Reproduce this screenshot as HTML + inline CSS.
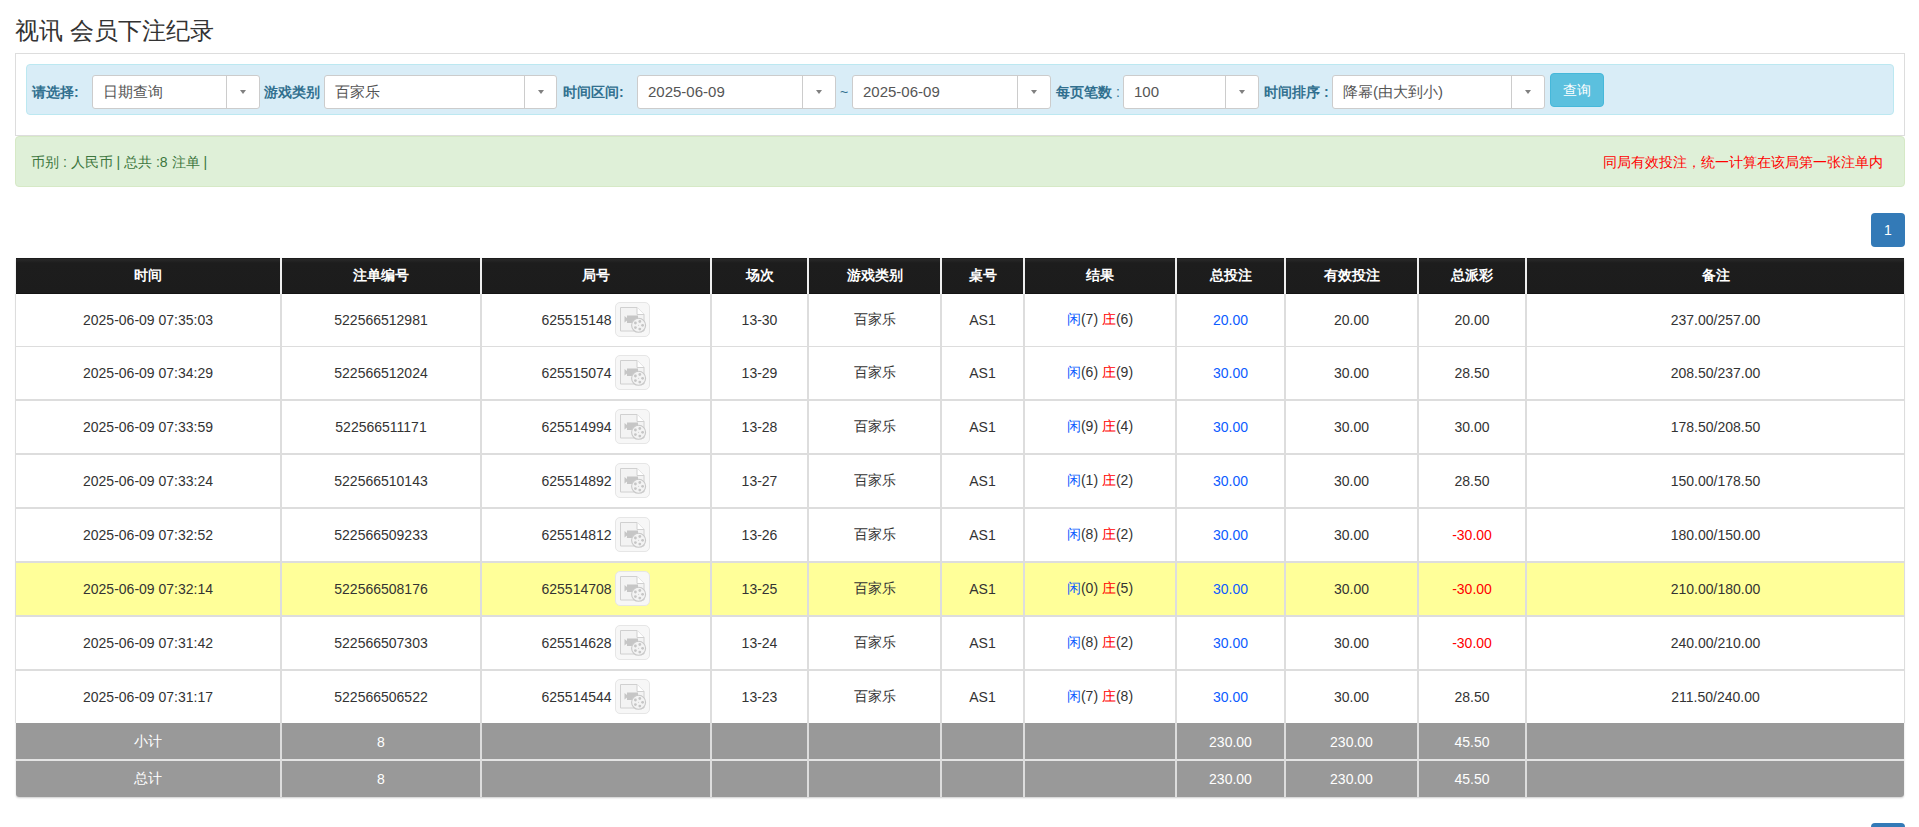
<!DOCTYPE html>
<html><head><meta charset="utf-8">
<style>
*{box-sizing:border-box;margin:0;padding:0}
html,body{width:1919px;height:827px;overflow:hidden;background:#fff}
body{font-family:"Liberation Sans",sans-serif;color:#333;font-size:14px;position:relative}
.a{position:absolute}
.title{left:15px;top:16px;font-size:24px;line-height:30px;color:#333;white-space:nowrap}
.panel{left:15px;top:53px;width:1890px;height:83px;border:1px solid #ddd;background:#fff}
.well{left:26px;top:64px;width:1868px;height:51px;background:#d9edf7;border:1px solid #bce8f1;border-radius:4px}
.lbl{font-weight:bold;color:#31708f;font-size:14px;line-height:20px;top:82px;white-space:nowrap}
.sel{top:75px;height:34px;background:#fff;border:1px solid #ccc;border-radius:3px}
.sel .t{position:absolute;left:10px;top:0;line-height:32px;font-size:15px;color:#555;white-space:nowrap}
.sel .d{position:absolute;top:0;bottom:0;width:1px;background:#ccc}
.sel .ar{position:absolute;top:14px;width:0;height:0;border-left:3.5px solid transparent;border-right:3.5px solid transparent;border-top:4px solid #808080}
.btn{left:1550px;top:73px;width:54px;height:34px;background:#5bc0de;border:1px solid #46b8da;border-radius:4px;color:#fff;font-size:14px;line-height:32px;text-align:center}
.alert{left:15px;top:136px;width:1890px;height:51px;background:#dff0d8;border:1px solid #d6e9c6;border-radius:4px}
.alt{left:31px;top:152px;color:#3c763d;font-size:14px;line-height:20px;white-space:nowrap}
.alr{right:36px;top:152px;color:#f00;font-size:14px;line-height:20px;white-space:nowrap}
.pg{left:1871px;width:34px;height:34px;background:#337ab7;border-radius:4px;color:#fff;font-size:14px;line-height:34px;text-align:center}
.thd{background:linear-gradient(#1c1c1c 0,#1c1c1c 1px,#292929 1px,#1d1d1d 5px,#1c1c1c 35px,#131313 35px)}
.c{display:flex;align-items:center;justify-content:center;white-space:nowrap;font-size:14px;color:#333}
.th{color:#fff;font-weight:bold}
.ft{color:#fff}
.bl{color:#0d5cff}
.rd{color:#f00}
.ic{display:inline-block;vertical-align:middle;width:35px;height:35px;margin-left:0;border:1px solid #e6e6e6;border-radius:5px;background:#f7f7f7;position:relative}
.ic{top:-1px}
.ic svg{position:absolute;left:-1px;top:-1px}
</style></head><body>
<div class="a title">视讯 会员下注纪录</div>
<div class="a panel"></div>
<div class="a well"></div>

<div class="a lbl" style="left:32px">请选择:</div>
<div class="a sel" style="left:92px;width:168px"><div class="t">日期查询</div><div class="d" style="left:133px"></div><div class="ar" style="left:147px"></div></div>

<div class="a lbl" style="left:264px">游戏类别</div>
<div class="a sel" style="left:324px;width:233px"><div class="t">百家乐</div><div class="d" style="left:199px"></div><div class="ar" style="left:213px"></div></div>

<div class="a lbl" style="left:563px">时间区间:</div>
<div class="a sel" style="left:637px;width:199px"><div class="t">2025-06-09</div><div class="d" style="left:164px"></div><div class="ar" style="left:178px"></div></div>
<div class="a" style="left:840px;top:82px;line-height:20px;color:#31708f">~</div>
<div class="a sel" style="left:852px;width:199px"><div class="t">2025-06-09</div><div class="d" style="left:164px"></div><div class="ar" style="left:178px"></div></div>

<div class="a lbl" style="left:1056px">每页笔数 <span style="font-weight:normal">:</span></div>
<div class="a sel" style="left:1123px;width:136px"><div class="t">100</div><div class="d" style="left:101px"></div><div class="ar" style="left:115px"></div></div>

<div class="a lbl" style="left:1264px">时间排序 :</div>
<div class="a sel" style="left:1332px;width:213px"><div class="t">降幂(由大到小)</div><div class="d" style="left:178px"></div><div class="ar" style="left:192px"></div></div>

<div class="a btn">查询</div>

<div class="a alert"></div>
<div class="a alt">币别 : 人民币 | 总共 :8 注单 |</div>
<div class="a alr">同局有效投注，统一计算在该局第一张注单内</div>

<div class="a pg" style="top:213px">1</div>
<div class="a pg" style="top:823px">1</div>

<!--TABLE-->
<div class="a" style="left:16px;top:258px;width:1888px;height:539px;border-radius:0 0 3px 3px;box-shadow:0 1px 2px rgba(0,0,0,.2)"></div>
<div class="a thd" style="left:16px;top:258px;width:1888px;height:36px"></div>
<div class="a" style="left:15px;top:294px;width:1890px;height:52px;background:#fff"></div>
<div class="a" style="left:15px;top:347px;width:1890px;height:52px;background:#fff"></div>
<div class="a" style="left:15px;top:401px;width:1890px;height:52px;background:#fff"></div>
<div class="a" style="left:15px;top:455px;width:1890px;height:52px;background:#fff"></div>
<div class="a" style="left:15px;top:509px;width:1890px;height:52px;background:#fff"></div>
<div class="a" style="left:15px;top:563px;width:1890px;height:52px;background:#ffff99"></div>
<div class="a" style="left:15px;top:617px;width:1890px;height:52px;background:#fff"></div>
<div class="a" style="left:15px;top:671px;width:1890px;height:52px;background:#fff"></div>
<div class="a" style="left:15px;top:346px;width:1890px;height:1px;background:#ddd"></div>
<div class="a" style="left:15px;top:399px;width:1890px;height:2px;background:#ddd"></div>
<div class="a" style="left:15px;top:453px;width:1890px;height:2px;background:#ddd"></div>
<div class="a" style="left:15px;top:507px;width:1890px;height:2px;background:#ddd"></div>
<div class="a" style="left:15px;top:561px;width:1890px;height:2px;background:#ddd"></div>
<div class="a" style="left:15px;top:615px;width:1890px;height:2px;background:#ddd"></div>
<div class="a" style="left:15px;top:669px;width:1890px;height:2px;background:#ddd"></div>
<div class="a" style="left:16px;top:723px;width:1888px;height:74px;background:#999;border-radius:0 0 3px 3px"></div>
<div class="a" style="left:16px;top:759px;width:1888px;height:2px;background:#e4e4e4"></div>
<div class="a" style="left:15px;top:294px;width:1px;height:429px;background:#ddd"></div>
<div class="a" style="left:1904px;top:294px;width:1px;height:429px;background:#ddd"></div>
<div class="a" style="left:280px;top:258px;width:2px;height:539px;background:#ddd"></div>
<div class="a" style="left:480px;top:258px;width:2px;height:539px;background:#ddd"></div>
<div class="a" style="left:710px;top:258px;width:2px;height:539px;background:#ddd"></div>
<div class="a" style="left:807px;top:258px;width:2px;height:539px;background:#ddd"></div>
<div class="a" style="left:940px;top:258px;width:2px;height:539px;background:#ddd"></div>
<div class="a" style="left:1023px;top:258px;width:2px;height:539px;background:#ddd"></div>
<div class="a" style="left:1175px;top:258px;width:2px;height:539px;background:#ddd"></div>
<div class="a" style="left:1284px;top:258px;width:2px;height:539px;background:#ddd"></div>
<div class="a" style="left:1417px;top:258px;width:2px;height:539px;background:#ddd"></div>
<div class="a" style="left:1525px;top:258px;width:2px;height:539px;background:#ddd"></div>
<div class="a" style="left:280px;top:258px;width:2px;height:36px;background:#eee"></div>
<div class="a" style="left:480px;top:258px;width:2px;height:36px;background:#eee"></div>
<div class="a" style="left:710px;top:258px;width:2px;height:36px;background:#eee"></div>
<div class="a" style="left:807px;top:258px;width:2px;height:36px;background:#eee"></div>
<div class="a" style="left:940px;top:258px;width:2px;height:36px;background:#eee"></div>
<div class="a" style="left:1023px;top:258px;width:2px;height:36px;background:#eee"></div>
<div class="a" style="left:1175px;top:258px;width:2px;height:36px;background:#eee"></div>
<div class="a" style="left:1284px;top:258px;width:2px;height:36px;background:#eee"></div>
<div class="a" style="left:1417px;top:258px;width:2px;height:36px;background:#eee"></div>
<div class="a" style="left:1525px;top:258px;width:2px;height:36px;background:#eee"></div>
<div class="a c th" style="left:16px;top:258px;width:264px;height:36px"><span>时间</span></div>
<div class="a c th" style="left:282px;top:258px;width:198px;height:36px"><span>注单编号</span></div>
<div class="a c th" style="left:482px;top:258px;width:228px;height:36px"><span>局号</span></div>
<div class="a c th" style="left:712px;top:258px;width:95px;height:36px"><span>场次</span></div>
<div class="a c th" style="left:809px;top:258px;width:131px;height:36px"><span>游戏类别</span></div>
<div class="a c th" style="left:942px;top:258px;width:81px;height:36px"><span>桌号</span></div>
<div class="a c th" style="left:1025px;top:258px;width:150px;height:36px"><span>结果</span></div>
<div class="a c th" style="left:1177px;top:258px;width:107px;height:36px"><span>总投注</span></div>
<div class="a c th" style="left:1286px;top:258px;width:131px;height:36px"><span>有效投注</span></div>
<div class="a c th" style="left:1419px;top:258px;width:106px;height:36px"><span>总派彩</span></div>
<div class="a c th" style="left:1527px;top:258px;width:377px;height:36px"><span>备注</span></div>
<div class="a c" style="left:16px;top:294px;width:264px;height:52px"><span>2025-06-09 07:35:03</span></div>
<div class="a c" style="left:282px;top:294px;width:198px;height:52px"><span>522566512981</span></div>
<div class="a c" style="left:482px;top:294px;width:228px;height:52px"><span><span style="position:relative;top:1px">625515148</span> <span class="ic"><svg width="35" height="35" viewBox="0 0 35 35"><path d="M5.5 5.5h16.5l7 7v16.5h-23.5z" fill="#f3f3f3" stroke="#d0d0d0" stroke-width="1"/><path d="M22 5.5v7h7" fill="#fff" stroke="#d0d0d0" stroke-width="1"/><path d="M9.5 14l2.5 2v-2.5h11v7.5h-11v-2.5l-2.5 2z" fill="#c6c6c6"/><circle cx="23.6" cy="23.3" r="7" fill="#f3f3f3" stroke="#c8c8c8" stroke-width="1.1"/><circle cx="27.6" cy="23.3" r="1.4" fill="#c6c6c6"/><circle cx="24.8" cy="27.1" r="1.4" fill="#c6c6c6"/><circle cx="20.4" cy="25.6" r="1.4" fill="#c6c6c6"/><circle cx="20.4" cy="21" r="1.4" fill="#c6c6c6"/><circle cx="24.8" cy="19.5" r="1.4" fill="#c6c6c6"/><circle cx="23.6" cy="23.3" r=".5" fill="#c6c6c6"/></svg></span></span></div>
<div class="a c" style="left:712px;top:294px;width:95px;height:52px"><span>13-30</span></div>
<div class="a c" style="left:809px;top:294px;width:131px;height:52px"><span>百家乐</span></div>
<div class="a c" style="left:942px;top:294px;width:81px;height:52px"><span>AS1</span></div>
<div class="a c" style="left:1025px;top:294px;width:150px;height:52px"><span><span class="bl">闲</span>(7) <span class="rd">庄</span>(6)</span></div>
<div class="a c" style="left:1177px;top:294px;width:107px;height:52px"><span><span class="bl">20.00</span></span></div>
<div class="a c" style="left:1286px;top:294px;width:131px;height:52px"><span>20.00</span></div>
<div class="a c" style="left:1419px;top:294px;width:106px;height:52px"><span>20.00</span></div>
<div class="a c" style="left:1527px;top:294px;width:377px;height:52px"><span>237.00/257.00</span></div>
<div class="a c" style="left:16px;top:347px;width:264px;height:52px"><span>2025-06-09 07:34:29</span></div>
<div class="a c" style="left:282px;top:347px;width:198px;height:52px"><span>522566512024</span></div>
<div class="a c" style="left:482px;top:347px;width:228px;height:52px"><span><span style="position:relative;top:1px">625515074</span> <span class="ic"><svg width="35" height="35" viewBox="0 0 35 35"><path d="M5.5 5.5h16.5l7 7v16.5h-23.5z" fill="#f3f3f3" stroke="#d0d0d0" stroke-width="1"/><path d="M22 5.5v7h7" fill="#fff" stroke="#d0d0d0" stroke-width="1"/><path d="M9.5 14l2.5 2v-2.5h11v7.5h-11v-2.5l-2.5 2z" fill="#c6c6c6"/><circle cx="23.6" cy="23.3" r="7" fill="#f3f3f3" stroke="#c8c8c8" stroke-width="1.1"/><circle cx="27.6" cy="23.3" r="1.4" fill="#c6c6c6"/><circle cx="24.8" cy="27.1" r="1.4" fill="#c6c6c6"/><circle cx="20.4" cy="25.6" r="1.4" fill="#c6c6c6"/><circle cx="20.4" cy="21" r="1.4" fill="#c6c6c6"/><circle cx="24.8" cy="19.5" r="1.4" fill="#c6c6c6"/><circle cx="23.6" cy="23.3" r=".5" fill="#c6c6c6"/></svg></span></span></div>
<div class="a c" style="left:712px;top:347px;width:95px;height:52px"><span>13-29</span></div>
<div class="a c" style="left:809px;top:347px;width:131px;height:52px"><span>百家乐</span></div>
<div class="a c" style="left:942px;top:347px;width:81px;height:52px"><span>AS1</span></div>
<div class="a c" style="left:1025px;top:347px;width:150px;height:52px"><span><span class="bl">闲</span>(6) <span class="rd">庄</span>(9)</span></div>
<div class="a c" style="left:1177px;top:347px;width:107px;height:52px"><span><span class="bl">30.00</span></span></div>
<div class="a c" style="left:1286px;top:347px;width:131px;height:52px"><span>30.00</span></div>
<div class="a c" style="left:1419px;top:347px;width:106px;height:52px"><span>28.50</span></div>
<div class="a c" style="left:1527px;top:347px;width:377px;height:52px"><span>208.50/237.00</span></div>
<div class="a c" style="left:16px;top:401px;width:264px;height:52px"><span>2025-06-09 07:33:59</span></div>
<div class="a c" style="left:282px;top:401px;width:198px;height:52px"><span>522566511171</span></div>
<div class="a c" style="left:482px;top:401px;width:228px;height:52px"><span><span style="position:relative;top:1px">625514994</span> <span class="ic"><svg width="35" height="35" viewBox="0 0 35 35"><path d="M5.5 5.5h16.5l7 7v16.5h-23.5z" fill="#f3f3f3" stroke="#d0d0d0" stroke-width="1"/><path d="M22 5.5v7h7" fill="#fff" stroke="#d0d0d0" stroke-width="1"/><path d="M9.5 14l2.5 2v-2.5h11v7.5h-11v-2.5l-2.5 2z" fill="#c6c6c6"/><circle cx="23.6" cy="23.3" r="7" fill="#f3f3f3" stroke="#c8c8c8" stroke-width="1.1"/><circle cx="27.6" cy="23.3" r="1.4" fill="#c6c6c6"/><circle cx="24.8" cy="27.1" r="1.4" fill="#c6c6c6"/><circle cx="20.4" cy="25.6" r="1.4" fill="#c6c6c6"/><circle cx="20.4" cy="21" r="1.4" fill="#c6c6c6"/><circle cx="24.8" cy="19.5" r="1.4" fill="#c6c6c6"/><circle cx="23.6" cy="23.3" r=".5" fill="#c6c6c6"/></svg></span></span></div>
<div class="a c" style="left:712px;top:401px;width:95px;height:52px"><span>13-28</span></div>
<div class="a c" style="left:809px;top:401px;width:131px;height:52px"><span>百家乐</span></div>
<div class="a c" style="left:942px;top:401px;width:81px;height:52px"><span>AS1</span></div>
<div class="a c" style="left:1025px;top:401px;width:150px;height:52px"><span><span class="bl">闲</span>(9) <span class="rd">庄</span>(4)</span></div>
<div class="a c" style="left:1177px;top:401px;width:107px;height:52px"><span><span class="bl">30.00</span></span></div>
<div class="a c" style="left:1286px;top:401px;width:131px;height:52px"><span>30.00</span></div>
<div class="a c" style="left:1419px;top:401px;width:106px;height:52px"><span>30.00</span></div>
<div class="a c" style="left:1527px;top:401px;width:377px;height:52px"><span>178.50/208.50</span></div>
<div class="a c" style="left:16px;top:455px;width:264px;height:52px"><span>2025-06-09 07:33:24</span></div>
<div class="a c" style="left:282px;top:455px;width:198px;height:52px"><span>522566510143</span></div>
<div class="a c" style="left:482px;top:455px;width:228px;height:52px"><span><span style="position:relative;top:1px">625514892</span> <span class="ic"><svg width="35" height="35" viewBox="0 0 35 35"><path d="M5.5 5.5h16.5l7 7v16.5h-23.5z" fill="#f3f3f3" stroke="#d0d0d0" stroke-width="1"/><path d="M22 5.5v7h7" fill="#fff" stroke="#d0d0d0" stroke-width="1"/><path d="M9.5 14l2.5 2v-2.5h11v7.5h-11v-2.5l-2.5 2z" fill="#c6c6c6"/><circle cx="23.6" cy="23.3" r="7" fill="#f3f3f3" stroke="#c8c8c8" stroke-width="1.1"/><circle cx="27.6" cy="23.3" r="1.4" fill="#c6c6c6"/><circle cx="24.8" cy="27.1" r="1.4" fill="#c6c6c6"/><circle cx="20.4" cy="25.6" r="1.4" fill="#c6c6c6"/><circle cx="20.4" cy="21" r="1.4" fill="#c6c6c6"/><circle cx="24.8" cy="19.5" r="1.4" fill="#c6c6c6"/><circle cx="23.6" cy="23.3" r=".5" fill="#c6c6c6"/></svg></span></span></div>
<div class="a c" style="left:712px;top:455px;width:95px;height:52px"><span>13-27</span></div>
<div class="a c" style="left:809px;top:455px;width:131px;height:52px"><span>百家乐</span></div>
<div class="a c" style="left:942px;top:455px;width:81px;height:52px"><span>AS1</span></div>
<div class="a c" style="left:1025px;top:455px;width:150px;height:52px"><span><span class="bl">闲</span>(1) <span class="rd">庄</span>(2)</span></div>
<div class="a c" style="left:1177px;top:455px;width:107px;height:52px"><span><span class="bl">30.00</span></span></div>
<div class="a c" style="left:1286px;top:455px;width:131px;height:52px"><span>30.00</span></div>
<div class="a c" style="left:1419px;top:455px;width:106px;height:52px"><span>28.50</span></div>
<div class="a c" style="left:1527px;top:455px;width:377px;height:52px"><span>150.00/178.50</span></div>
<div class="a c" style="left:16px;top:509px;width:264px;height:52px"><span>2025-06-09 07:32:52</span></div>
<div class="a c" style="left:282px;top:509px;width:198px;height:52px"><span>522566509233</span></div>
<div class="a c" style="left:482px;top:509px;width:228px;height:52px"><span><span style="position:relative;top:1px">625514812</span> <span class="ic"><svg width="35" height="35" viewBox="0 0 35 35"><path d="M5.5 5.5h16.5l7 7v16.5h-23.5z" fill="#f3f3f3" stroke="#d0d0d0" stroke-width="1"/><path d="M22 5.5v7h7" fill="#fff" stroke="#d0d0d0" stroke-width="1"/><path d="M9.5 14l2.5 2v-2.5h11v7.5h-11v-2.5l-2.5 2z" fill="#c6c6c6"/><circle cx="23.6" cy="23.3" r="7" fill="#f3f3f3" stroke="#c8c8c8" stroke-width="1.1"/><circle cx="27.6" cy="23.3" r="1.4" fill="#c6c6c6"/><circle cx="24.8" cy="27.1" r="1.4" fill="#c6c6c6"/><circle cx="20.4" cy="25.6" r="1.4" fill="#c6c6c6"/><circle cx="20.4" cy="21" r="1.4" fill="#c6c6c6"/><circle cx="24.8" cy="19.5" r="1.4" fill="#c6c6c6"/><circle cx="23.6" cy="23.3" r=".5" fill="#c6c6c6"/></svg></span></span></div>
<div class="a c" style="left:712px;top:509px;width:95px;height:52px"><span>13-26</span></div>
<div class="a c" style="left:809px;top:509px;width:131px;height:52px"><span>百家乐</span></div>
<div class="a c" style="left:942px;top:509px;width:81px;height:52px"><span>AS1</span></div>
<div class="a c" style="left:1025px;top:509px;width:150px;height:52px"><span><span class="bl">闲</span>(8) <span class="rd">庄</span>(2)</span></div>
<div class="a c" style="left:1177px;top:509px;width:107px;height:52px"><span><span class="bl">30.00</span></span></div>
<div class="a c" style="left:1286px;top:509px;width:131px;height:52px"><span>30.00</span></div>
<div class="a c" style="left:1419px;top:509px;width:106px;height:52px"><span><span class="rd">-30.00</span></span></div>
<div class="a c" style="left:1527px;top:509px;width:377px;height:52px"><span>180.00/150.00</span></div>
<div class="a c" style="left:16px;top:563px;width:264px;height:52px"><span>2025-06-09 07:32:14</span></div>
<div class="a c" style="left:282px;top:563px;width:198px;height:52px"><span>522566508176</span></div>
<div class="a c" style="left:482px;top:563px;width:228px;height:52px"><span><span style="position:relative;top:1px">625514708</span> <span class="ic"><svg width="35" height="35" viewBox="0 0 35 35"><path d="M5.5 5.5h16.5l7 7v16.5h-23.5z" fill="#f3f3f3" stroke="#d0d0d0" stroke-width="1"/><path d="M22 5.5v7h7" fill="#fff" stroke="#d0d0d0" stroke-width="1"/><path d="M9.5 14l2.5 2v-2.5h11v7.5h-11v-2.5l-2.5 2z" fill="#c6c6c6"/><circle cx="23.6" cy="23.3" r="7" fill="#f3f3f3" stroke="#c8c8c8" stroke-width="1.1"/><circle cx="27.6" cy="23.3" r="1.4" fill="#c6c6c6"/><circle cx="24.8" cy="27.1" r="1.4" fill="#c6c6c6"/><circle cx="20.4" cy="25.6" r="1.4" fill="#c6c6c6"/><circle cx="20.4" cy="21" r="1.4" fill="#c6c6c6"/><circle cx="24.8" cy="19.5" r="1.4" fill="#c6c6c6"/><circle cx="23.6" cy="23.3" r=".5" fill="#c6c6c6"/></svg></span></span></div>
<div class="a c" style="left:712px;top:563px;width:95px;height:52px"><span>13-25</span></div>
<div class="a c" style="left:809px;top:563px;width:131px;height:52px"><span>百家乐</span></div>
<div class="a c" style="left:942px;top:563px;width:81px;height:52px"><span>AS1</span></div>
<div class="a c" style="left:1025px;top:563px;width:150px;height:52px"><span><span class="bl">闲</span>(0) <span class="rd">庄</span>(5)</span></div>
<div class="a c" style="left:1177px;top:563px;width:107px;height:52px"><span><span class="bl">30.00</span></span></div>
<div class="a c" style="left:1286px;top:563px;width:131px;height:52px"><span>30.00</span></div>
<div class="a c" style="left:1419px;top:563px;width:106px;height:52px"><span><span class="rd">-30.00</span></span></div>
<div class="a c" style="left:1527px;top:563px;width:377px;height:52px"><span>210.00/180.00</span></div>
<div class="a c" style="left:16px;top:617px;width:264px;height:52px"><span>2025-06-09 07:31:42</span></div>
<div class="a c" style="left:282px;top:617px;width:198px;height:52px"><span>522566507303</span></div>
<div class="a c" style="left:482px;top:617px;width:228px;height:52px"><span><span style="position:relative;top:1px">625514628</span> <span class="ic"><svg width="35" height="35" viewBox="0 0 35 35"><path d="M5.5 5.5h16.5l7 7v16.5h-23.5z" fill="#f3f3f3" stroke="#d0d0d0" stroke-width="1"/><path d="M22 5.5v7h7" fill="#fff" stroke="#d0d0d0" stroke-width="1"/><path d="M9.5 14l2.5 2v-2.5h11v7.5h-11v-2.5l-2.5 2z" fill="#c6c6c6"/><circle cx="23.6" cy="23.3" r="7" fill="#f3f3f3" stroke="#c8c8c8" stroke-width="1.1"/><circle cx="27.6" cy="23.3" r="1.4" fill="#c6c6c6"/><circle cx="24.8" cy="27.1" r="1.4" fill="#c6c6c6"/><circle cx="20.4" cy="25.6" r="1.4" fill="#c6c6c6"/><circle cx="20.4" cy="21" r="1.4" fill="#c6c6c6"/><circle cx="24.8" cy="19.5" r="1.4" fill="#c6c6c6"/><circle cx="23.6" cy="23.3" r=".5" fill="#c6c6c6"/></svg></span></span></div>
<div class="a c" style="left:712px;top:617px;width:95px;height:52px"><span>13-24</span></div>
<div class="a c" style="left:809px;top:617px;width:131px;height:52px"><span>百家乐</span></div>
<div class="a c" style="left:942px;top:617px;width:81px;height:52px"><span>AS1</span></div>
<div class="a c" style="left:1025px;top:617px;width:150px;height:52px"><span><span class="bl">闲</span>(8) <span class="rd">庄</span>(2)</span></div>
<div class="a c" style="left:1177px;top:617px;width:107px;height:52px"><span><span class="bl">30.00</span></span></div>
<div class="a c" style="left:1286px;top:617px;width:131px;height:52px"><span>30.00</span></div>
<div class="a c" style="left:1419px;top:617px;width:106px;height:52px"><span><span class="rd">-30.00</span></span></div>
<div class="a c" style="left:1527px;top:617px;width:377px;height:52px"><span>240.00/210.00</span></div>
<div class="a c" style="left:16px;top:671px;width:264px;height:52px"><span>2025-06-09 07:31:17</span></div>
<div class="a c" style="left:282px;top:671px;width:198px;height:52px"><span>522566506522</span></div>
<div class="a c" style="left:482px;top:671px;width:228px;height:52px"><span><span style="position:relative;top:1px">625514544</span> <span class="ic"><svg width="35" height="35" viewBox="0 0 35 35"><path d="M5.5 5.5h16.5l7 7v16.5h-23.5z" fill="#f3f3f3" stroke="#d0d0d0" stroke-width="1"/><path d="M22 5.5v7h7" fill="#fff" stroke="#d0d0d0" stroke-width="1"/><path d="M9.5 14l2.5 2v-2.5h11v7.5h-11v-2.5l-2.5 2z" fill="#c6c6c6"/><circle cx="23.6" cy="23.3" r="7" fill="#f3f3f3" stroke="#c8c8c8" stroke-width="1.1"/><circle cx="27.6" cy="23.3" r="1.4" fill="#c6c6c6"/><circle cx="24.8" cy="27.1" r="1.4" fill="#c6c6c6"/><circle cx="20.4" cy="25.6" r="1.4" fill="#c6c6c6"/><circle cx="20.4" cy="21" r="1.4" fill="#c6c6c6"/><circle cx="24.8" cy="19.5" r="1.4" fill="#c6c6c6"/><circle cx="23.6" cy="23.3" r=".5" fill="#c6c6c6"/></svg></span></span></div>
<div class="a c" style="left:712px;top:671px;width:95px;height:52px"><span>13-23</span></div>
<div class="a c" style="left:809px;top:671px;width:131px;height:52px"><span>百家乐</span></div>
<div class="a c" style="left:942px;top:671px;width:81px;height:52px"><span>AS1</span></div>
<div class="a c" style="left:1025px;top:671px;width:150px;height:52px"><span><span class="bl">闲</span>(7) <span class="rd">庄</span>(8)</span></div>
<div class="a c" style="left:1177px;top:671px;width:107px;height:52px"><span><span class="bl">30.00</span></span></div>
<div class="a c" style="left:1286px;top:671px;width:131px;height:52px"><span>30.00</span></div>
<div class="a c" style="left:1419px;top:671px;width:106px;height:52px"><span>28.50</span></div>
<div class="a c" style="left:1527px;top:671px;width:377px;height:52px"><span>211.50/240.00</span></div>
<div class="a c ft" style="left:16px;top:723px;width:264px;height:37px"><span>小计</span></div>
<div class="a c ft" style="left:282px;top:723px;width:198px;height:37px"><span>8</span></div>
<div class="a c ft" style="left:1177px;top:723px;width:107px;height:37px"><span>230.00</span></div>
<div class="a c ft" style="left:1286px;top:723px;width:131px;height:37px"><span>230.00</span></div>
<div class="a c ft" style="left:1419px;top:723px;width:106px;height:37px"><span>45.50</span></div>
<div class="a c ft" style="left:16px;top:761px;width:264px;height:36px"><span>总计</span></div>
<div class="a c ft" style="left:282px;top:761px;width:198px;height:36px"><span>8</span></div>
<div class="a c ft" style="left:1177px;top:761px;width:107px;height:36px"><span>230.00</span></div>
<div class="a c ft" style="left:1286px;top:761px;width:131px;height:36px"><span>230.00</span></div>
<div class="a c ft" style="left:1419px;top:761px;width:106px;height:36px"><span>45.50</span></div>
<!--/TABLE-->
</body></html>
